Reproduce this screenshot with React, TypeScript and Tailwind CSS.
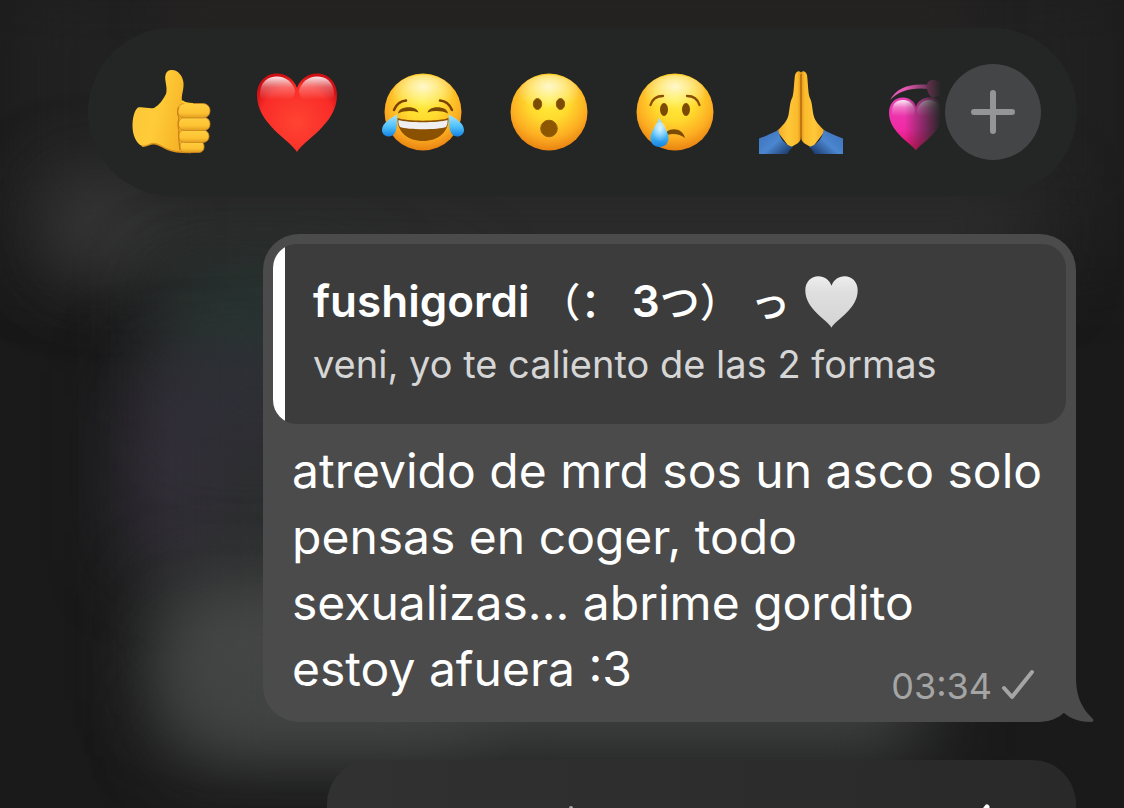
import { useState, type ReactNode } from "react";

const HEART =
  "M42 82 C35 70 2 54 2 25 C2 12 11 3.5 22 3.5 C31 3.5 39 9 42 18 C45 9 53 3.5 62 3.5 C73 3.5 82 12 82 25 C82 54 49 70 42 82Z";

const Gradients = () => (
  <svg className="absolute size-0" aria-hidden="true">
    <defs>
      <radialGradient id="face" cx="50%" cy="34%" r="66%">
        <stop offset="0" stopColor="#ffee3c" />
        <stop offset="0.4" stopColor="#ffdb2e" />
        <stop offset="0.75" stopColor="#fdae22" />
        <stop offset="1" stopColor="#e98312" />
      </radialGradient>
      <radialGradient id="glow" cx="50%" cy="30%" r="60%">
        <stop offset="0" stopColor="#fff" stopOpacity="0.75" />
        <stop offset="0.5" stopColor="#fff" stopOpacity="0.35" />
        <stop offset="1" stopColor="#fff" stopOpacity="0" />
      </radialGradient>
      <linearGradient id="shine" x1="0" y1="0" x2="0" y2="1">
        <stop offset="0" stopColor="#fff" stopOpacity="0.9" />
        <stop offset="0.35" stopColor="#fff" stopOpacity="0.3" />
        <stop offset="0.75" stopColor="#fff" stopOpacity="0" />
      </linearGradient>
      <linearGradient id="tear" x1="0" y1="0" x2="0" y2="1">
        <stop offset="0" stopColor="#a9e6ff" />
        <stop offset="0.55" stopColor="#4fc0fb" />
        <stop offset="1" stopColor="#1583e0" />
      </linearGradient>
      <radialGradient id="red" cx="50%" cy="62%" r="62%">
        <stop offset="0" stopColor="#ff4432" />
        <stop offset="0.75" stopColor="#f92c28" />
        <stop offset="1" stopColor="#cf0f14" />
      </radialGradient>
      <linearGradient id="pink" x1="0" y1="0" x2="0" y2="1">
        <stop offset="0" stopColor="#e840b4" />
        <stop offset="0.6" stopColor="#f02aa5" />
        <stop offset="1" stopColor="#dc1060" />
      </linearGradient>
      <linearGradient id="silver" x1="0" y1="0" x2="0" y2="1">
        <stop offset="0" stopColor="#eeeeee" />
        <stop offset="0.3" stopColor="#dfdfdf" />
        <stop offset="1" stopColor="#d4d4d4" />
      </linearGradient>
      <linearGradient id="skin" x1="0" y1="0" x2="1" y2="0.3">
        <stop offset="0" stopColor="#fbc738" />
        <stop offset="0.5" stopColor="#ffcb38" />
        <stop offset="1" stopColor="#f5b125" />
      </linearGradient>
      <linearGradient id="finger" x1="0" y1="0" x2="0" y2="1">
        <stop offset="0" stopColor="#ffd042" />
        <stop offset="0.65" stopColor="#fdc232" />
        <stop offset="1" stopColor="#e09c20" />
      </linearGradient>
      <linearGradient id="palm" x1="0" y1="0" x2="1" y2="0">
        <stop offset="0" stopColor="#f3a922" />
        <stop offset="0.45" stopColor="#ffc83a" />
        <stop offset="0.85" stopColor="#fbbb2c" />
        <stop offset="1" stopColor="#e0951c" />
      </linearGradient>
      <linearGradient id="sleeve" x1="0" y1="0" x2="1" y2="0.8">
        <stop offset="0" stopColor="#3a6fb9" />
        <stop offset="0.55" stopColor="#4b86cf" />
        <stop offset="1" stopColor="#1d3c6c" />
      </linearGradient>
    </defs>
  </svg>
);

const Emoji = ({ children }: { children: ReactNode }) => (
  <svg viewBox="0 0 84 84" className="size-full" aria-hidden="true">
    {children}
  </svg>
);

const Face = ({ children }: { children: ReactNode }) => (
  <Emoji>
    <circle cx="42" cy="42" r="38.5" fill="url(#face)" />
    <ellipse cx="42" cy="24" rx="30" ry="19" fill="url(#glow)" />
    {children}
  </Emoji>
);

const ThumbsUp = () => (
  <Emoji>
    <path
      d="M9 37.5 C14 36.5 20 39 25 38 C30 35 34 30 37 24 C39 17 35 10 36.500 5 C37.500 1 40 0 43 0 C49 0 54 6 54.500 13 C55 20 52 25 53 31 C56 33 59 34 62 35 L64 82.500 C55 82.500 45 82 38 79 C33 77 29 73.500 24 73.500 C20 74 17 77 13 76 C7 73 3.500 65 3.500 56 C3.500 48 5.500 40 9 37.500Z"
      fill="url(#skin)"
    />
    <path
      d="M13 76 C17 77 20 74 24 73.500 C29 73.500 33 77 38 79 C44 82 53 82.500 62 82.500"
      fill="none"
      stroke="#dc941c"
      strokeWidth="1.500"
    />
    <g fill="url(#finger)" stroke="#cc861c" strokeWidth="0.800">
      <rect x="51" y="71" width="24" height="11.500" rx="5" />
      <rect x="49.500" y="60" width="30.500" height="12.500" rx="6" />
      <rect x="49.500" y="47.500" width="31.500" height="13" rx="6" />
      <rect x="48.500" y="33.500" width="32.500" height="14.500" rx="7" />
    </g>
    <path
      d="M53 31 C56 34 60 34 64 34"
      fill="none"
      stroke="#ffc933"
      strokeWidth="2"
    />
    <path
      d="M50 37 C47.500 42 49 46 50 48 C48.500 54 49 58 50 60 C49 66 50 72 51 80"
      fill="none"
      stroke="#cb8216"
      strokeWidth="1.200"
    />
  </Emoji>
);

const RedHeart = () => (
  <Emoji>
    <path d={HEART} fill="url(#red)" />
    <path
      d="M5 24 C5 12 13 6.500 22 6.500 C31 6.500 37 12 40 20 C40 38 5 46 5 24Z"
      fill="url(#shine)"
    />
    <path
      d="M44 20 C47 12 53 6.500 62 6.500 C71 6.500 79 12 79 24 C79 46 44 38 44 20Z"
      fill="url(#shine)"
    />
  </Emoji>
);

const Joy = () => (
  <Face>
    <g fill="none" stroke="#7b4100" strokeWidth="2.500" strokeLinecap="round">
      <path d="M13 40 C15 35 19 31 25 30.500" />
      <path d="M71 40 C69 35 65 31 59 30.500" />
    </g>
    <g fill="#7b4a05">
      <path d="M17 43.500 C18 35.500 36 35.500 37.500 42.500 C31 40.500 24 40.500 17 43.500Z" />
      <path d="M67 43.500 C66 35.500 48 35.500 46.500 42.500 C53 40.500 60 40.500 67 43.500Z" />
    </g>
    <path
      d="M16.500 48 C25 51.500 59 51.500 67.500 48 C68 62 57 71 42 71 C27 71 16 62 16.500 48Z"
      fill="#8a5200"
    />
    <path
      d="M17.500 50 C27 53 57 53 66.500 50 C67 53 66 55 65 57 C57 60 27 60 19 57 C18 55 17 53 17.500 50Z"
      fill="#f0eff0"
    />
    <path
      d="M16 44.500 C10 48 1 53 1 60 C1 64 4 66.500 8 66.500 C15 66.500 16.500 58 16 44.500Z"
      fill="url(#tear)"
    />
    <path
      d="M68 44.500 C74 48 83 53 83 60 C83 64 80 66.500 76 66.500 C69 66.500 67.500 58 68 44.500Z"
      fill="url(#tear)"
    />
  </Face>
);

const Wow = () => (
  <Face>
    <g fill="#7b4a05" stroke="#945f0a" strokeWidth="1">
      <ellipse cx="30.500" cy="34" rx="4.200" ry="5.500" />
      <ellipse cx="53.500" cy="34" rx="4.200" ry="5.500" />
      <ellipse cx="42" cy="58.500" rx="8.300" ry="8.300" fill="#8d5600" />
    </g>
  </Face>
);

const Cry = () => (
  <Face>
    <g fill="#7b4a05">
      <ellipse cx="31" cy="39.500" rx="4" ry="6.500" />
      <ellipse cx="53" cy="39.500" rx="4" ry="6.500" />
    </g>
    <g fill="none" stroke="#8a4b05" strokeWidth="2.300" strokeLinecap="round">
      <path d="M17.500 35 C19 30 23 26 30 26" />
      <path d="M66.500 35 C65 30 61 26 54 26" />
    </g>
    <path
      d="M34 61.500 C40 57 50 59 52 68 C47 64 40 63 34 65Z"
      fill="#7b4a05"
    />
    <path
      d="M26.500 47.500 C24 55 17.500 61 17.500 68 C17.500 73 21 77 26.500 77 C32 77 35.500 73 35.500 68 C35.500 61 29 55 26.500 47.500Z"
      fill="url(#tear)"
    />
    <ellipse cx="27" cy="63" rx="7" ry="11" fill="url(#glow)" />
  </Face>
);

const PrayHalf = () => (
  <>
    <path
      d="M42 2.500 C40 0 37 1.500 36 5 C35 12 35 22 33.500 27 C30.500 33 31 38 29.500 45 C28 52 23 56 18 61 L31 78 C36 74 42 74 42 66Z"
      fill="url(#palm)"
    />
    <path
      d="M0 68.500 C7 66 13 63 19.500 60 C20 68 26 75 34 77 C31 79 30 82 28.500 84 L0 84Z"
      fill="url(#sleeve)"
    />
  </>
);

const Pray = () => (
  <Emoji>
    <PrayHalf />
    <g transform="matrix(-1 0 0 1 84 0)">
      <PrayHalf />
    </g>
    <path d="M42 4 V69" stroke="#a85f0a" strokeWidth="1.200" />
  </Emoji>
);

const RevolvingHearts = () => (
  <Emoji>
    <path
      d="M5 30 C12 17 26 13 44 15 L44 19 C28 17 15 20 5 30Z"
      fill="#e758b4"
    />
    <path
      d="M42 14 C44 9 50 9 52 11 C58 8 63 14 60 19 C58 24 53 27 48 28 C43 25 41 19 42 14Z"
      fill="#d0428f"
    />
    <path
      d="M31 80.500 C27 74 4 62 4 43 C4 34 9 27.500 18 27.500 C25 27.500 30 32 31 37 C32 32 37 27.500 44 27.500 C53 27.500 58 34 58 43 C58 62 35 74 31 80.500Z"
      fill="url(#pink)"
    />
    <path
      d="M7 42 C7 34 11 30 18 30 C25 30 28 34 30 40 C29 53 8 57 7 42Z"
      fill="url(#shine)"
    />
    <path
      d="M32 40 C34 34 38 30 44 30 C50 30 55 34 55 42 C54 57 33 53 32 40Z"
      fill="url(#shine)"
    />
  </Emoji>
);

const reactions = [
  { name: "Me gusta", icon: <ThumbsUp /> },
  { name: "Corazón", icon: <RedHeart /> },
  { name: "Risa", icon: <Joy /> },
  { name: "Asombro", icon: <Wow /> },
  { name: "Tristeza", icon: <Cry /> },
  { name: "Gracias", icon: <Pray /> },
  { name: "Corazones", icon: <RevolvingHearts /> },
];

const ReactionBar = () => {
  const [selected, setSelected] = useState<string | null>(null);

  return (
    <div className="mr-[47px] ml-[88px] flex h-[168px] shrink-0 items-center rounded-full bg-[#242625] pr-9 pl-[41px]">
      <div className="flex min-w-0 flex-1 gap-[42px] overflow-hidden [mask-image:linear-gradient(to_right,black_calc(100%-36px),transparent)]">
        {reactions.map(({ name, icon }) => (
          <button
            key={name}
            aria-label={name}
            aria-pressed={selected === name}
            onClick={() => setSelected(name)}
            className="size-[84px] shrink-0"
          >
            {icon}
          </button>
        ))}
      </div>
      <button
        aria-label="Más reacciones"
        className="ml-1 flex size-24 shrink-0 items-center justify-center rounded-full bg-[#444547]"
      >
        <svg viewBox="0 0 44 44" className="size-11" aria-hidden="true">
          <path
            d="M22 3 V41 M3 22 H41"
            stroke="#959597"
            strokeWidth="6"
            strokeLinecap="round"
          />
        </svg>
      </button>
    </div>
  );
};

// blurred chat behind the focused message
const Backdrop = () => (
  <div className="absolute inset-0 -z-10 bg-[#1a1a1a]" aria-hidden="true">
    <div className="absolute -top-10 right-0 left-0 h-[290px] bg-[#212121] blur-2xl" />
    <div className="absolute top-[190px] right-[90px] left-[60px] h-[80px] bg-[#2f2f2f] blur-2xl" />
    <div className="absolute top-[180px] left-[50px] size-[90px] rounded-full bg-[#3c3c3c] blur-2xl" />
    <div className="absolute top-0 right-[150px] left-[160px] h-6 bg-[#2c2524] blur-xl" />
    <div className="absolute top-[280px] left-[160px] h-[420px] w-[300px] bg-[#2c2e2e] blur-2xl" />
    <div className="absolute top-[275px] left-[175px] h-[80px] w-[180px] bg-[#283834] blur-2xl" />
    <div className="absolute top-[370px] left-[135px] h-[190px] w-[70px] bg-[#37323f] blur-2xl" />
    <div className="absolute top-[370px] left-[180px] h-[60px] w-[150px] bg-[#312f3b] blur-2xl" />
    <div className="absolute top-[590px] left-[170px] h-[140px] w-[300px] bg-[#494a49] blur-2xl" />
    <div className="absolute top-[640px] left-[180px] h-[115px] w-[740px] bg-[#424443] blur-2xl" />
  </div>
);

const App = () => (
  <main className="relative isolate flex h-screen flex-col overflow-hidden pt-7 font-['Inter','Noto_Sans_CJK_SC',sans-serif] text-white">
    <Gradients />
    <Backdrop />
    <ReactionBar />

    <article className="relative mt-[38px] mr-12 ml-[263px] shrink-0 rounded-[36px] bg-[#4b4b4b] p-[10px] pb-3">
      <blockquote className="flex h-[180px] overflow-hidden rounded-3xl bg-[#3c3c3c]">
        <div className="w-3 shrink-0 bg-white" />
        <div className="pt-[29px] pl-7">
          <p className="flex h-14 items-center text-[44px] font-semibold whitespace-pre">
            <span>
              fushigordi{" "}
              <span lang="zh-Hans" className="text-[40px] font-medium">
                （：
              </span>{" "}
              3
              <span lang="zh-Hans" className="text-[40px] font-medium">
                つ） っ
              </span>
            </span>
            <svg
              viewBox="0 0 84 84"
              className="ml-[14px] size-[55px]"
              role="img"
              aria-label="corazón blanco"
            >
              <path d={HEART} fill="url(#silver)" />
            </svg>
          </p>
          <p className="mt-2 text-[38px] leading-[54px] text-[#d6d6d6]">
            veni, yo te caliento de las 2 formas
          </p>
        </div>
      </blockquote>
      <div className="mt-[14px] flow-root pr-5 pl-[19px] text-[48px] leading-[66px]">
        atrevido de mrd sos un asco solo pensas en coger, todo sexualizas...
        abrime gordito estoy afuera :3
        <div className="float-right mt-[26px] mr-[10px] flex items-center gap-2 text-[36px] leading-[48px] text-[#a5a5a5]">
          <time>03:34</time>
          <svg
            viewBox="0 0 36 36"
            className="size-9"
            fill="none"
            stroke="currentColor"
            strokeWidth="4"
            strokeLinecap="round"
            strokeLinejoin="round"
            role="img"
            aria-label="enviado"
          >
            <path d="M4 20 L12 29 L32 4" />
          </svg>
        </div>
      </div>
      <svg
        viewBox="0 0 54 50"
        className="absolute -right-[18px] bottom-0 h-[50px] w-[54px]"
        aria-hidden="true"
      >
        <path
          d="M20 0 H36 V5 C36 28 44 38 53 47 C54 49 53 50 51 50 C40 50 31 47 24 41 L10 30Z"
          fill="#4b4b4b"
        />
      </svg>
    </article>

    {/* next bubble, cut by the bottom of the screen */}
    <div className="mt-[38px] mr-12 ml-[327px] flex h-[160px] shrink-0 justify-between rounded-[44px] bg-linear-to-r from-[#313131] to-[#292929] pt-11 pr-[85px] pl-[242px]">
      <span className="mt-[2px] size-1 rounded-full bg-[#a5a5a5]" />
      <svg
        viewBox="0 0 36 36"
        className="size-9"
        fill="none"
        stroke="white"
        strokeWidth="5"
        strokeLinecap="round"
        strokeLinejoin="round"
        aria-hidden="true"
      >
        <path d="M4 20 L12 29 L32 3" />
      </svg>
    </div>
  </main>
);

export default App;
